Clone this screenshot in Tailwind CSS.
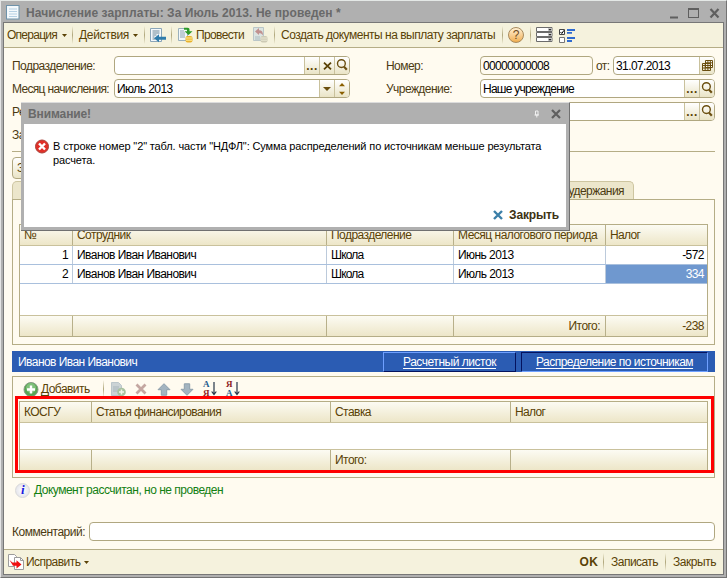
<!DOCTYPE html>
<html lang="ru">
<head>
<meta charset="utf-8">
<title>Начисление зарплаты</title>
<script src="https://cdn.jsdelivr.net/npm/@tailwindcss/browser@4"></script>
</head>
<body class="m-0 overflow-hidden">
<svg class="hidden">
  <symbol id="mag" viewBox="0 0 14 15"><circle cx="6.4" cy="5.6" r="3.9" fill="none" stroke="#6b4f10" stroke-width="1.4"/><path d="M9 8.600l2.800 3.200" stroke="#6b4f10" stroke-width="2.200"/></symbol>
  <symbol id="down" viewBox="0 0 5 3"><path d="M0 0h5L2.500 3z" fill="#5a4206"/></symbol>
</svg>
<div class="relative flex h-[578px] w-[727px] flex-col border-t border-l border-r border-b border-t-[#e4e8e6] border-l-[#e4e4e4] border-r-[#737373] border-b-[#737373] bg-[#b0b0b0] pr-[2px] pb-[2px] pl-[2px] font-['Liberation_Sans',sans-serif] text-[12px] leading-[14px] tracking-[-0.55px] whitespace-nowrap text-[#4b3a12]">
  <!-- title bar -->
  <header class="flex h-[21px] shrink-0 items-center pt-[2px] pl-[3px]">
    <svg class="h-[15px] w-[14px]" viewBox="0 0 14 15"><rect x=".5" y=".5" width="12.500" height="13.500" fill="#f4f9fc" stroke="#6f93ab"/><path d="M3 4h8M3 6.500h8M3 9h8M3 11.500h8" stroke="#b5d0e4"/></svg>
    <h1 class="ml-[6px] grow font-bold tracking-[0.07px] text-[#696969]">Начисление зарплаты: За Июль 2013. Не проведен *</h1>
    <svg class="h-[16px] w-[55px]" viewBox="0 0 55 16" fill="none" stroke="#5f5f5f"><path d="M1 12.500h8" stroke-width="2"/><rect x="19.500" y="3.500" width="10" height="9"/><path d="M19 4h11" stroke-width="2"/><path d="M41.500 4l8 8.500M49.500 4l-8 8.500" stroke-width="2.200"/></svg>
  </header>

  <div class="flex min-h-0 grow flex-col border border-[#777] bg-[#fffbf0]">
    <!-- command bar -->
    <nav class="flex h-[25px] shrink-0 items-center border-b border-[#b5ad86] bg-[#f5f2dd] text-[#5a4206]">
      <div class="flex w-[68px] items-center pl-[3px]"><span class="w-[55px] tracking-[-0.74px]">Операция</span><svg class="h-[3px] w-[5px]"><use href="#down"/></svg></div>
      <i class="h-[18px] w-px bg-linear-to-b from-[#f5f2dd] via-[#b0a77c] to-[#f5f2dd]"></i>
      <div class="flex w-[71px] items-center pl-[6px]"><span class="w-[54px] tracking-[-0.32px]">Действия</span><svg class="h-[3px] w-[5px]"><use href="#down"/></svg></div>
      <i class="h-[18px] w-px bg-linear-to-b from-[#f5f2dd] via-[#b0a77c] to-[#f5f2dd]"></i>
      <div class="flex w-[26px] pl-[5px]">
        <svg class="h-[15px] w-[16px]" viewBox="0 0 16 15"><path d="M.5.5h11v13H.5z" fill="#f4f8fb" stroke="#8aa5b8"/><path d="M2.500 3h7M2.500 5h7M2.500 7h4M2.500 9h2M2.500 11h3" stroke="#6d8797"/><path d="M16 8.700v3H9v2.600L4 10.200 9 6.200v2.500z" fill="#2f7cab"/></svg>
      </div>
      <i class="h-[18px] w-px bg-linear-to-b from-[#f5f2dd] via-[#b0a77c] to-[#f5f2dd]"></i>
      <div class="flex w-[102px] items-center pl-[6px]">
        <svg class="h-[16px] w-[15px]" viewBox="0 0 15 16"><path d="M.5 1.500h9v12h-9z" fill="#f2f7fa" stroke="#9ab0bd"/><path d="M2 4h4M2 6h5M2 8h5M2 10h5" stroke="#8ca3b0"/><path d="M6 .8h3.500c1.500 0 2 .8 2 2v1.400H14.500L10.500 8 6.500 4.200H9V2.800H6z" fill="#2b9a28"/><rect x="7.500" y="9" width="7" height="6.500" rx="2" fill="#e9b22d"/><path d="M8 11h6M8 13.200h6" stroke="#fff0a0"/></svg>
        <span class="ml-[3px] w-[57px] tracking-[-0.64px]">Провести</span>
        <svg class="h-[16px] w-[15px] opacity-60" viewBox="0 0 15 16"><path d="M.5.500h10v13H.5z" fill="#ccdbe5" stroke="#93aabb"/><path d="M2 10h5M2 12h5" stroke="#7f9aae"/><path d="M2 4.500L6 1v2.200c3 0 4 1.800 4 5.300-1-1.800-2-2.300-4-2.300V8z" fill="#a0525c"/><rect x="7.500" y="9" width="7" height="6.500" rx="2" fill="#b3b09a"/><path d="M8 11h6M8 13.200h6" stroke="#e5e2d0"/></svg>
      </div>
      <i class="h-[18px] w-px bg-linear-to-b from-[#f5f2dd] via-[#b0a77c] to-[#f5f2dd]"></i>
      <div class="w-[227px] pl-[6px] tracking-[-0.49px]">Создать документы на выплату зарплаты</div>
      <i class="h-[18px] w-px bg-linear-to-b from-[#f5f2dd] via-[#b0a77c] to-[#f5f2dd]"></i>
      <div class="flex w-[27px] pl-[5px]"><span class="flex h-[16px] w-[16px] items-center justify-center rounded-full border border-[#a98a5c] bg-linear-to-b from-[#fff0d2] to-[#f0ae4e] text-[12px] tracking-normal text-[#6e4a1c]">?</span></div>
      <i class="h-[18px] w-px bg-linear-to-b from-[#f5f2dd] via-[#b0a77c] to-[#f5f2dd]"></i>
      <svg class="ml-[5px] h-[16px] w-[17px]" viewBox="0 0 17 16"><g fill="#fff" stroke="#6c6c6c"><path d="M.5.500h15.500v4H.5zM.5 5.500h15.500v4H.5zM.5 10.500h15.500v4H.5z"/></g><path d="M12 1h3.500v3H12zM12 6h3.500v3H12zM12 11h3.500v3H12z" fill="#c9c9c9"/><path d="M12.500 2h3L14 3.700zM12.500 7h3L14 8.700zM12.500 12h3L14 13.700z" fill="#222"/></svg>
      <svg class="ml-[6px] h-[15px] w-[17px]" viewBox="0 0 17 15"><path d="M.5 1.500h5v5h-5z" fill="#fff" stroke="#444"/><path d="M1.500 4l1.300 1.500L5 2.300" fill="none" stroke="#000"/><path d="M.5 9.500h5v5h-5z" fill="#fff" stroke="#777"/><path d="M8 2h8M8 4.900h5M8 10h8M8 13h5" stroke="#2f6bd0" stroke-width="1.800"/></svg>
    </nav>

    <main class="flex grow flex-col px-[8px] pt-[8px]">
      <!-- requisites -->
      <section class="flex flex-col gap-[4px]">
        <div class="flex h-[19px] items-center">
          <label class="w-[102px]">Подразделение:</label>
          <div class="flex h-[19px] w-[236px] overflow-hidden rounded-[4px] border border-[#b0a780] bg-white text-[#5a4206]">
            <span class="grow"></span>
            <b class="flex w-[15px] items-end justify-center border-l border-[#c9c19c] bg-linear-to-b from-white to-[#eae4c6] pb-px tracking-[0.5px]">...</b>
            <span class="flex w-[15px] items-center justify-center border-l border-[#c9c19c] bg-linear-to-b from-white to-[#eae4c6]"><svg class="h-[8px] w-[9px]" viewBox="0 0 9 8"><path d="M1 .7l7 6.600M8 .7L1 7.300" stroke="#5a4206" stroke-width="1.800"/></svg></span>
            <span class="w-[15px] border-l border-[#c9c19c] bg-linear-to-b from-white to-[#eae4c6]"><svg class="mt-px h-[15px] w-[14px]"><use href="#mag"/></svg></span>
          </div>
          <label class="ml-[36px] w-[94px]">Номер:</label>
          <div class="h-[19px] w-[113px] rounded-[4px] border border-[#b0a780] bg-[#fffbf0] pt-[2px] pl-[2px] tracking-[-0.67px] text-black">00000000008</div>
          <label class="ml-[3px] w-[17px] tracking-[-0.6px]">от:</label>
          <div class="flex h-[19px] w-[102px] overflow-hidden rounded-[4px] border border-[#b0a780] bg-white text-black">
            <span class="grow pt-[2px] pl-[2px] tracking-[-0.6px]">31.07.2013</span>
            <span class="flex w-[15px] items-center justify-center border-l border-[#c9c19c] bg-linear-to-b from-white to-[#eae4c6]"><svg class="h-[11px] w-[11px]" viewBox="0 0 11 11"><path d="M3.500.5h7v7h-7z" fill="#fff" stroke="#6b4f10"/><path d="M.5 3.500h8v7h-8zM.5 5.500h10M.5 8h8M3.200 3v8M5.900 .5v10M8.300 .5v8M3.500 2.800h7" fill="none" stroke="#6b4f10"/></svg></span>
          </div>
        </div>
        <div class="flex h-[19px] items-center">
          <label class="w-[102px] tracking-[-0.67px]">Месяц начисления:</label>
          <div class="flex h-[19px] w-[236px] overflow-hidden rounded-[4px] border border-[#b0a780] bg-white text-black">
            <span class="grow pt-[2px] pl-[2px]">Июль 2013</span>
            <span class="flex w-[15px] items-center justify-center border-l border-[#c9c19c] bg-linear-to-b from-white to-[#eae4c6]"><svg class="h-[4px] w-[8px]" viewBox="0 0 8 4"><path d="M0 0h8L4 4z" fill="#6b4f10"/></svg></span>
            <span class="flex w-[15px] items-center justify-center border-l border-[#c9c19c] bg-linear-to-b from-white to-[#eae4c6]"><svg class="h-[12px] w-[6px]" viewBox="0 0 6 12"><path d="M0 3.200L3 0l3 3.200zM0 8.800L3 12l3-3.200z" fill="#8a5f00"/></svg></span>
          </div>
          <label class="ml-[36px] w-[94px]">Учреждение:</label>
          <div class="flex h-[19px] w-[235px] overflow-hidden rounded-[4px] border border-[#b0a780] bg-white text-[#5a4206]">
            <span class="grow pt-[2px] pl-[2px] tracking-[-0.75px] text-black">Наше учреждение</span>
            <b class="flex w-[15px] items-end justify-center border-l border-[#c9c19c] bg-linear-to-b from-white to-[#eae4c6] pb-px tracking-[0.5px]">...</b>
            <span class="w-[15px] border-l border-[#c9c19c] bg-linear-to-b from-white to-[#eae4c6]"><svg class="mt-px h-[15px] w-[14px]"><use href="#mag"/></svg></span>
          </div>
        </div>
        <div class="flex h-[19px] items-center justify-between">
          <label>Ре</label>
          <div class="flex h-[19px] w-[235px] overflow-hidden rounded-[4px] border border-[#b0a780] bg-white text-[#5a4206]">
            <span class="grow"></span>
            <b class="flex w-[15px] items-end justify-center border-l border-[#c9c19c] bg-linear-to-b from-white to-[#eae4c6] pb-px tracking-[0.5px]">...</b>
            <span class="w-[15px] border-l border-[#c9c19c] bg-linear-to-b from-white to-[#eae4c6]"><svg class="mt-px h-[15px] w-[14px]"><use href="#mag"/></svg></span>
          </div>
        </div>
        <div class="h-[27px] border-b border-[#b5ad86] pt-[3px]">За</div>
      </section>

      <div class="mt-[5px] flex h-[22px] shrink-0"><span class="w-[80px] rounded-[4px] border border-[#b0a780] bg-linear-to-b from-white to-[#eae4c6] pt-[3px] pl-[4px] text-[#5a4206]">З</span></div>

      <!-- deductions tab -->
      <div class="mt-[2px] flex h-[18px] shrink-0 justify-between pr-[81px]">
        <span class="w-[100px] rounded-t-[5px] border border-b-0 border-[#cdc5a0] bg-[#ece6cb]"></span>
        <span class="w-[120px] rounded-t-[5px] border border-b-0 border-[#cdc5a0] bg-[#ece6cb] pt-[2px] pr-[9px] text-right">удержания</span>
      </div>
      <section class="h-[146px] shrink-0 border border-[#b5ad86] px-[6px] pt-[24px]">
        <div class="flex h-[113px] flex-col border border-[#b5ad86] bg-white text-black">
          <div class="grid h-[21px] grid-cols-[53px_254px_127px_152px_1fr] border-b border-[#c9c19c] bg-linear-to-b from-[#fcfbf3] to-[#ede6c8] text-[#5a4206] *:border-[#b8b08a] *:pt-[3px] *:pl-[4px]">
            <span class="border-r">№</span><span class="border-r">Сотрудник</span><span class="border-r">Подразделение</span><span class="border-r tracking-[-0.5px]">Месяц налогового периода</span><span class="tracking-[-0.65px]">Налог</span>
          </div>
          <div class="grid h-[19px] grid-cols-[53px_254px_127px_152px_1fr] border-b border-[#a9c0dd] *:border-[#bccadb] *:pt-[2px] *:pl-[4px]">
            <span class="border-r pr-[4px] text-right">1</span><span class="border-r">Иванов Иван Иванович</span><span class="border-r tracking-[-0.85px]">Школа</span><span class="border-r">Июнь 2013</span><span class="pr-[3px] text-right">-572</span>
          </div>
          <div class="grid h-[19px] grid-cols-[53px_254px_127px_152px_1fr] border-b border-[#a9c0dd] *:border-[#bccadb] *:pt-[2px] *:pl-[4px]">
            <span class="border-r pr-[4px] text-right">2</span><span class="border-r">Иванов Иван Иванович</span><span class="border-r tracking-[-0.85px]">Школа</span><span class="border-r">Июль 2013</span><span class="bg-[#6f98cf] pr-[3px] text-right text-white">334</span>
          </div>
          <div class="grow"></div>
          <div class="grid h-[21px] grid-cols-[53px_254px_127px_152px_1fr] border-t border-[#c9c19c] bg-linear-to-b from-[#fcfbf3] to-[#ede6c8] text-[#5a4206] *:border-[#b8b08a] *:pt-[3px]">
            <span class="border-r"></span><span class="border-r"></span><span class="border-r"></span><span class="border-r pr-[5px] text-right">Итого:</span><span class="pr-[3px] text-right">-238</span>
          </div>
        </div>
      </section>

      <div class="mt-[6px] flex h-[21px] shrink-0 items-center bg-[#2b5cb3] text-white">
        <span class="grow pl-[6px]">Иванов Иван Иванович</span>
        <button class="mt-px mr-[5px] h-[20px] w-[133px] border border-t-[#6fa0ff] border-r-[#05135e] border-b-[#05135e] border-l-[#6fa0ff] tracking-[-0.47px] underline underline-offset-2">Расчетный листок</button>
        <button class="mt-px mr-[7px] h-[20px] w-[187px] border border-t-[#05135e] border-r-[#6fa0ff] border-b-[#6fa0ff] border-l-[#05135e] tracking-[-0.52px] underline underline-offset-2">Распределение по источникам</button>
      </div>

      <!-- distribution by sources -->
      <section class="relative mt-[4px] h-[102px] shrink-0 border border-[#b5ad86] px-[6px]">
        <div class="flex h-[24px] items-center pl-[4px] text-[#5a4206]">
          <svg class="h-[15px] w-[16px]" viewBox="0 0 16 15"><circle cx="8" cy="7.500" r="7" fill="#58a653" stroke="#8a9c87"/><circle cx="8" cy="6" r="5" fill="#7fc07a"/><path d="M8 3.500v8M4 7.500h8" stroke="#fff" stroke-width="2.400"/></svg>
          <span class="ml-[2px] w-[62px]"><u class="underline-offset-2">Д</u>обавить</span>
          <i class="mr-[7px] h-[18px] w-px bg-linear-to-b from-[#fffbf0] via-[#b0a77c] to-[#fffbf0]"></i>
          <svg class="h-[15px] w-[15px] opacity-60" viewBox="0 0 15 15"><path d="M.5.500h7l3 3v10H.5z" fill="#a9b9c4" stroke="#8fa3b1"/><path d="M2 5h6M2 7h6M2 9h5" stroke="#6f8798"/><circle cx="10.500" cy="10" r="4.300" fill="#6f9c6b"/><path d="M10.500 7.500v5M8 10h5" stroke="#e9f2e6" stroke-width="1.500"/></svg>
          <svg class="ml-[9px] h-[12px] w-[12px]" viewBox="0 0 12 12"><path d="M1.500 1.500l9 9M10.500 1.500l-9 9" stroke="#c4a7a1" stroke-width="2.800"/></svg>
          <svg class="ml-[10px] h-[13px] w-[14px]" viewBox="0 0 14 13"><path d="M7 .7l6 6H9.700v5.500H4.300V6.700H1z" fill="#a3b4c0" stroke="#8d9fac"/></svg>
          <svg class="ml-[9px] h-[13px] w-[14px]" viewBox="0 0 14 13"><path d="M7 12.300l6-6H9.700V.800H4.300v5.500H1z" fill="#a3b4c0" stroke="#8d9fac"/></svg>
          <span class="ml-[9px] flex items-center font-['Liberation_Serif',serif] text-[9px] leading-[9px] font-bold tracking-normal"><span class="w-[8px]"><span class="block text-[#1d5d8f]">А</span><span class="block text-[#8f1d24]">Я</span></span><svg class="h-[14px] w-[6px]" viewBox="0 0 6 14"><path d="M3 0v12M.7 9.500L3 12.500l2.300-3" fill="none" stroke="#26364a" stroke-width="1.200"/></svg></span>
          <span class="ml-[9px] flex items-center font-['Liberation_Serif',serif] text-[9px] leading-[9px] font-bold tracking-normal"><span class="w-[8px]"><span class="block text-[#8f1d24]">Я</span><span class="block text-[#1d5d8f]">А</span></span><svg class="h-[14px] w-[6px]" viewBox="0 0 6 14"><path d="M3 0v12M.7 9.500L3 12.500l2.300-3" fill="none" stroke="#26364a" stroke-width="1.200"/></svg></span>
        </div>
        <div class="flex h-[70px] flex-col border border-[#b5ad86] bg-white text-[#5a4206]">
          <div class="grid h-[21px] grid-cols-[72px_239px_180px_1fr] border-b border-[#c9c19c] bg-linear-to-b from-[#fcfbf3] to-[#ede6c8] *:border-[#b8b08a] *:pt-[3px] *:pl-[4px]">
            <span class="border-r">КОСГУ</span><span class="border-r tracking-[-0.58px]">Статья финансирования</span><span class="border-r">Ставка</span><span class="tracking-[-0.65px]">Налог</span>
          </div>
          <div class="grow"></div>
          <div class="grid h-[21px] grid-cols-[72px_239px_180px_1fr] border-t border-[#c9c19c] bg-linear-to-b from-[#fcfbf3] to-[#ede6c8] *:border-[#b8b08a] *:pt-[3px] *:pl-[4px]">
            <span class="border-r"></span><span class="border-r"></span><span class="border-r">Итого:</span><span></span>
          </div>
        </div>
        <div class="absolute top-[19px] left-[2px] h-[77px] w-[699px] border-[3px] border-[#ff0000]"></div>
      </section>

      <div class="mt-[4px] flex h-[16px] items-center pl-[3px] text-[#128012]">
        <span class="flex h-[15px] w-[15px] items-center justify-center rounded-full border border-[#d9d9d9] bg-radial from-white to-[#dcdce4] font-['Liberation_Serif',serif] text-[13px] font-bold text-[#1a1ae0] italic">i</span>
        <span class="ml-[4px] tracking-[-0.5px]">Документ рассчитан, но не проведен</span>
      </div>
      <div class="mt-[24px] flex h-[19px] items-center">
        <label class="w-[77px] tracking-[-0.49px]">Комментарий:</label>
        <div class="h-[19px] grow rounded-[4px] border border-[#b0a780] bg-white"></div>
      </div>
    </main>

    <footer class="flex h-[25px] shrink-0 items-center border-t border-[#b5ad86] bg-[#f5f2dd] pr-[7px] pl-[4px] text-[#5a4206]">
      <svg class="h-[16px] w-[16px]" viewBox="0 0 16 16"><path d="M.5.500h6l2 2v10h-8z" fill="#fff" stroke="#9c9c9c"/><path d="M6.500 3.500h6l3 3v9h-9z" fill="#fff" stroke="#9c9c9c"/><path d="M12.500 3.500v3h3" fill="none" stroke="#9c9c9c"/><path d="M1.500 6l3 2.500h4V6.200l5 4.300-5 4v-2.700H5z" fill="#f01010"/></svg>
      <span class="ml-[2px] w-[58px]">Исправить</span><svg class="h-[3px] w-[5px]"><use href="#down"/></svg>
      <span class="grow"></span>
      <b class="tracking-[0.3px]">OK</b>
      <i class="mr-[7px] ml-[5px] h-[18px] w-px bg-linear-to-b from-[#f5f2dd] via-[#b0a77c] to-[#f5f2dd]"></i>
      <span>Записать</span>
      <i class="mr-[7px] ml-[7px] h-[18px] w-px bg-linear-to-b from-[#f5f2dd] via-[#b0a77c] to-[#f5f2dd]"></i>
      <span class="tracking-[-0.46px]">Закрыть</span>
    </footer>
  </div>

  <!-- warning dialog -->
  <div class="absolute top-[101px] left-[20px] flex h-[129px] w-[549px] flex-col border-t border-r border-b border-t-[#dcdcdc] border-r-[#707070] border-b-[#707070] bg-[#b0b0b0] pr-[3px] pb-[3px] pl-[3px] text-black">
    <div class="flex h-[21px] shrink-0 items-center pt-px pr-[5px] pl-[4px]">
      <b class="grow tracking-[-0.11px] text-[#696969]">Внимание!</b>
      <svg class="mr-[11px] h-[8px] w-[6px]" viewBox="0 0 6 8"><path d="M1.500 1h2.500v4H1.500zM.500 5h4.500M2.800 5v2.500" fill="none" stroke="#f0f0f0"/></svg>
      <svg class="h-[10px] w-[10px]" viewBox="0 0 10 10"><path d="M1 1l8 8M9 1L1 9" stroke="#5f5f5f" stroke-width="2.200"/></svg>
    </div>
    <div class="flex grow flex-col bg-white pt-[15px] pr-[7px] pl-[11px]">
      <div class="flex gap-[4px]">
        <svg class="h-[15px] w-[14px] shrink-0" viewBox="0 0 14 15"><circle cx="7" cy="7.500" r="6.500" fill="#e03028" stroke="#a84038"/><path d="M4 4.500l6 6M10 4.500l-6 6" stroke="#fff" stroke-width="2.400"/></svg>
        <p class="mt-px text-[11px] leading-[13.500px] tracking-[-0.13px]">В строке номер "2" табл. части "НДФЛ": Сумма распределений по источникам меньше результата<br>расчета.</p>
      </div>
      <div class="mt-auto flex items-center justify-end pb-[5px] text-[#3d3214]">
        <svg class="mr-[6px] h-[10px] w-[10px]" viewBox="0 0 10 10"><path d="M1 1l8 8M9 1L1 9" stroke="#3b7fa8" stroke-width="2.400"/></svg>
        <b class="tracking-[-0.15px]">Закрыть</b>
      </div>
    </div>
  </div>
</div>
</body>
</html>
